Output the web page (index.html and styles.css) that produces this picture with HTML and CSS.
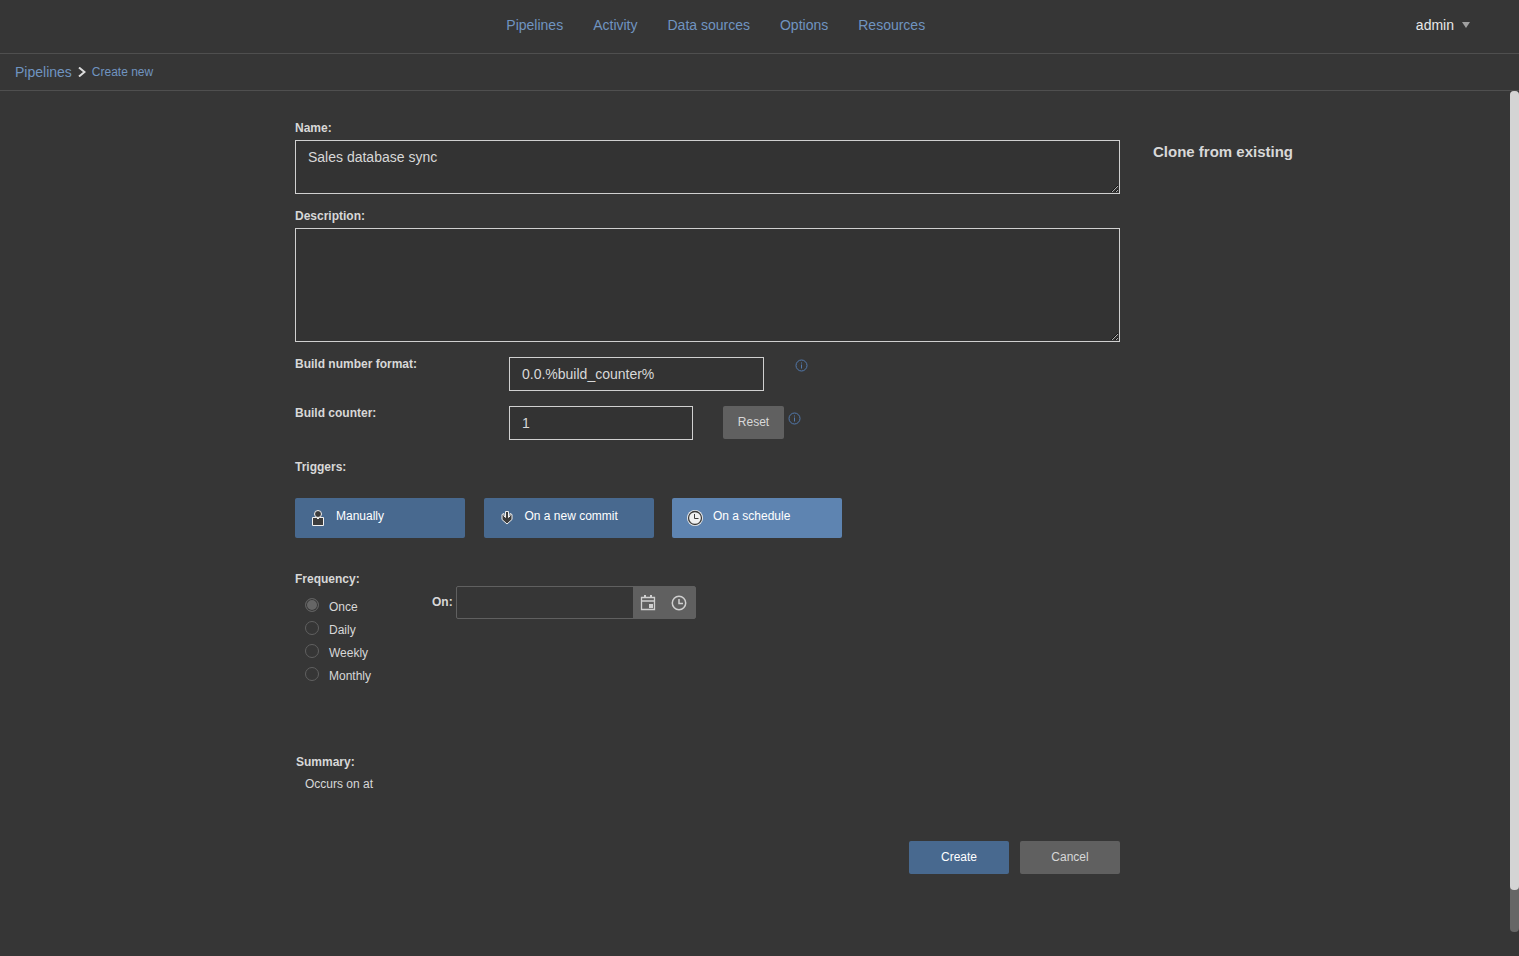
FILE: index.html
```html
<!DOCTYPE html>
<html lang="en">
  <head>
    <meta charset="UTF-8" />
    <meta name="viewport" content="width=device-width, initial-scale=1.0" />
    <title>Create new pipeline</title>
    <link rel="stylesheet" href="styles.css">
  </head>

  <body>
    <!-- top bar -->
    <header class="topbar">
      <nav class="menu">
        <a href="#">Pipelines</a>
        <a href="#">Activity</a>
        <a href="#">Data sources</a>
        <a href="#">Options</a>
        <a href="#">Resources</a>
      </nav>
      <button type="button" class="user">
        admin
        <svg width="8" height="6" viewBox="0 0 8 6"><path d="M0 0h8L4 6z" fill="#a0a0a0"/></svg>
      </button>
    </header>

    <!-- breadcrumb -->
    <nav class="crumbs">
      <a href="#">Pipelines</a>
      <svg width="8" height="10" viewBox="0 0 8 10"><path d="M1 .5L6.5 5 1 9.5" fill="none" stroke="#dcdcdc" stroke-width="2"/></svg>
      <a href="#" class="current">Create new</a>
    </nav>

    <div class="page">
      <main class="content">
        <form class="pipeline">
          <div class="field">
            <label for="name">Name:</label>
            <textarea id="name" class="name">Sales database sync</textarea>
          </div>
          <div class="field">
            <label for="desc">Description:</label>
            <textarea id="desc" class="desc"></textarea>
          </div>

          <div class="row">
            <label for="format">Build number format:</label>
            <input type="text" id="format" class="format" value="0.0.%build_counter%">
            <svg class="info" width="13" height="13" viewBox="0 0 13 13"><circle cx="6.5" cy="6.5" r="5.5"/><path d="M6.5 5.500v4M6.5 3.500v1"/></svg>
          </div>
          <div class="row">
            <label for="counter">Build counter:</label>
            <input type="text" id="counter" class="counter" value="1">
            <button type="button" class="btn reset">Reset</button>
            <svg class="info" width="13" height="13" viewBox="0 0 13 13"><circle cx="6.5" cy="6.5" r="5.5"/><path d="M6.5 5.500v4M6.5 3.500v1"/></svg>
          </div>

          <!-- triggers -->
          <section class="triggers">
            <h2>Triggers:</h2>
            <div class="trigger-list">
              <button type="button" class="trigger">
                <svg width="16" height="16" viewBox="0 0 16 16" fill="#3c3c3c" stroke="#f0f0f0"><path d="M2.5 7.5h11v8h-11z"/><path d="M6.5 7.5L8 9l1.500-1.500V7h-3z" fill="#f0f0f0"/><circle cx="8" cy="4" r="3.500"/></svg>
                <span>Manually</span>
              </button>
              <button type="button" class="trigger">
                <svg width="16" height="16" viewBox="0 0 16 16" fill="#3c3c3c" stroke="#f0f0f0"><path d="M6.5 1.5h3v6L11 6V3.5l2 1v5L8 14 3 9.5v-5l2-1V6l1.5 1.5z"/></svg>
                <span>On a new commit</span>
              </button>
              <button type="button" class="trigger active">
                <svg width="16" height="16" viewBox="0 0 16 16"><circle cx="8" cy="8" r="8" fill="#f0f0f0"/><circle cx="8" cy="8" r="6.500" fill="none" stroke="#3c3c3c" stroke-width="1.300"/><path d="M7.5 4v4.500h4" fill="none" stroke="#3c3c3c"/></svg>
                <span>On a schedule</span>
              </button>
            </div>
          </section>

          <!-- schedule -->
          <section class="schedule">
            <fieldset class="frequency">
              <legend>Frequency:</legend>
              <label><input type="radio" name="freq" checked><span>Once</span></label>
              <label><input type="radio" name="freq"><span>Daily</span></label>
              <label><input type="radio" name="freq"><span>Weekly</span></label>
              <label><input type="radio" name="freq"><span>Monthly</span></label>
            </fieldset>
            <div class="when">
              <label for="on">On:</label>
              <div class="picker">
                <input type="text" id="on">
                <button type="button" aria-label="Pick date">
                  <svg width="16" height="16" viewBox="0 0 16 16"><path d="M1.5 2.5h13v12h-13zM1 6h14" fill="none" stroke="#d0d0d0" stroke-width="1.300"/><path d="M4 0h2v3H4zM10 0h2v3h-2zM9 9h4v4H9z" fill="#d0d0d0"/></svg>
                </button>
                <button type="button" aria-label="Pick time">
                  <svg width="16" height="16" viewBox="0 0 16 16" fill="none" stroke="#d0d0d0" stroke-width="1.500"><circle cx="8" cy="8" r="6.700"/><path d="M8 4v4.500h4"/></svg>
                </button>
              </div>
            </div>
          </section>

          <section class="summary">
            <h2>Summary:</h2>
            <p>Occurs on at</p>
          </section>

          <div class="actions">
            <button type="button" class="btn primary">Create</button>
            <button type="button" class="btn">Cancel</button>
          </div>
        </form>

        <aside class="clone">
          <h2>Clone from existing</h2>
        </aside>
      </main>

      <!-- scroll track -->
      <div class="track">
        <div class="thumb"></div>
      </div>
    </div>
  </body>
</html>
```
FILE: styles.css
```css
* {
  box-sizing: border-box;
}

body {
  display: flex;
  flex-direction: column;
  min-height: 100vh;
  margin: 0;
  background-color: #363636;
  color: #d8d8d8;
  font: 12px/14px "Liberation Sans", Arial, sans-serif;
}

a {
  color: #7094c0;
  text-decoration: none;
}

h2, p {
  margin: 0;
}

h2, label, legend {
  font-size: 12px;
  font-weight: bold;
}

button, input, textarea {
  margin: 0;
  color: inherit;
  font-family: inherit;
}

svg {
  display: block;
  flex: none;
}

/* top bar */
.topbar {
  display: grid;
  grid-template-columns: 1fr 1fr 1fr;
  align-items: center;
  height: 54px;
  padding-bottom: 3px;
  border-bottom: 1px solid #4f4f4f;
}

.menu {
  display: flex;
  grid-column: 2;
  gap: 30px;
  font-size: 14px;
  white-space: nowrap;
}

.user {
  display: flex;
  align-items: center;
  justify-self: end;
  gap: 8px;
  margin-right: 49px;
  padding: 0;
  border: 0;
  background: none;
  color: #e8e8e8;
  font-size: 14px;
}

/* breadcrumb */
.crumbs {
  display: flex;
  align-items: center;
  gap: 6px;
  height: 37px;
  padding-left: 15px;
  border-bottom: 1px solid #4f4f4f;
  font-size: 14px;
}

.crumbs .current {
  font-size: 12px;
}

/* page body */
.page {
  display: flex;
  flex: 1;
  padding-bottom: 24px;
}

.content {
  display: grid;
  flex: 1;
  grid-template-columns: 59fr 165fr 78fr;
  padding-top: 30px;
}

.pipeline {
  display: flex;
  flex-direction: column;
  grid-column: 2;
  gap: 15px;
}

.clone {
  padding: 22px 0 0 33px;
}

.clone h2 {
  font-size: 15px;
  line-height: 18px;
}

.field {
  display: flex;
  flex-direction: column;
  gap: 5px;
}

textarea, .row input {
  padding: 6px 12px;
  border: 1px solid #d0d0d0;
  background-color: #333;
  font-size: 14px;
  line-height: 20px;
}

.name {
  height: 54px;
}

.desc {
  height: 114px;
}

.row {
  display: flex;
  align-items: flex-start;
}

.row label {
  width: 214px;
}

.row input {
  height: 34px;
}

.row .format {
  width: 255px;
}

.row .counter {
  width: 184px;
}

.info {
  fill: none;
  stroke: #5279ad;
}

.format + .info {
  margin: 2px 0 0 31px;
}

.reset + .info {
  margin: 6px 0 0 4px;
}

/* buttons */
.btn {
  width: 100px;
  height: 33px;
  padding: 0 0 2px;
  border: 0;
  border-radius: 2px;
  background-color: #606060;
  font-size: 12px;
}

.reset {
  width: 61px;
  margin-left: 30px;
}

.primary {
  background-color: #48698f;
  color: #fff;
}

/* triggers */
.triggers {
  display: flex;
  flex-direction: column;
  gap: 24px;
  padding-top: 5px;
}

.trigger-list {
  display: flex;
  justify-content: space-between;
  max-width: 547px;
}

.trigger {
  display: flex;
  align-items: center;
  gap: 10px;
  width: 170px;
  height: 40px;
  padding: 0 15px;
  border: 0;
  border-radius: 2px;
  background-color: #48698f;
  color: #fff;
  font-size: 12px;
}

.trigger span {
  padding-bottom: 4px;
}

.trigger.active {
  background-color: #5e84b1;
}

/* schedule */
.schedule {
  display: flex;
  align-items: flex-start;
  padding-top: 19px;
}

.frequency {
  width: 137px;
  margin: 0;
  padding: 0;
  border: 0;
}

.frequency legend {
  margin-bottom: 9px;
  padding: 0;
}

.frequency label {
  display: flex;
  align-items: center;
  gap: 10px;
  height: 23px;
  padding-left: 10px;
  font-weight: normal;
}

.frequency span {
  padding-top: 1px;
}

.frequency input {
  width: 14px;
  height: 14px;
  margin-bottom: 3px;
  border: 1px solid #606060;
  border-radius: 50%;
  appearance: none;
}

.frequency input:checked {
  background-color: #666;
  box-shadow: inset 0 0 0 1px #363636;
}

.when {
  display: flex;
  align-items: center;
  gap: 3px;
  padding-top: 14px;
}

.when > label {
  padding-bottom: 2px;
}

.picker {
  display: flex;
  height: 33px;
  border: 1px solid #606060;
  border-radius: 2px;
}

.picker input {
  width: 176px;
  padding: 0 12px;
  border: 0;
  background: none;
  font-size: 14px;
}

.picker button {
  display: grid;
  place-items: center;
  width: 31px;
  padding: 0;
  border: 0;
  background-color: #606060;
}

/* summary */
.summary {
  padding: 53px 0 0 1px;
}

.summary p {
  padding: 8px 0 0 9px;
}

.actions {
  display: flex;
  justify-content: flex-end;
  gap: 11px;
  padding-top: 35px;
}

/* scroll track */
.track {
  width: 9px;
  border-radius: 4px;
  background-color: #666;
}

.thumb {
  height: 95%;
  border-radius: 4px;
  background-color: #d4d4d4;
}
```
